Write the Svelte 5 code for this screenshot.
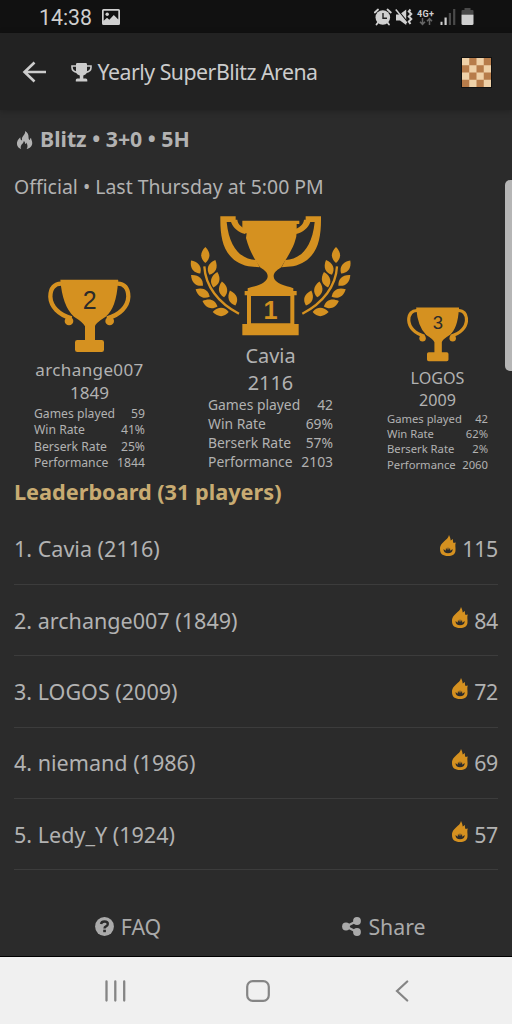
<script>
  const podium = [
    { place: 2, name: 'archange007', rating: 1849, games: 59, win: '41%', berserk: '25%', perf: 1844 },
    { place: 1, name: 'Cavia', rating: 2116, games: 42, win: '69%', berserk: '57%', perf: 2103 },
    { place: 3, name: 'LOGOS', rating: 2009, games: 42, win: '62%', berserk: '2%', perf: 2060 }
  ];
  const players = [
    { name: 'Cavia', rating: 2116, score: 115 },
    { name: 'archange007', rating: 1849, score: 84 },
    { name: 'LOGOS', rating: 2009, score: 72 },
    { name: 'niemand', rating: 1986, score: 69 },
    { name: 'Ledy_Y', rating: 1924, score: 57 }
  ];
  // Laurel leaves: centre x, centre y, rotation
  const leaves = [
    [76, 147, 0], [47, 183, -35], [97, 184, 22], [51, 223, -48], [106, 221, 15],
    [68, 261, -62], [129, 250, -8], [90, 293, -70], [158, 276, -20], [122, 318, -90]
  ];
</script>

<div class="screen">
  <div class="status">
    <span class="clock">14:38</span>
    <svg class="picture" width="18" height="17" viewBox="0 0 18 17"><path fill-rule="evenodd" fill="#d0d0d0" d="M1.500 0h15Q18 0 18 1.500v13q0 1.500-1.500 1.500h-15Q0 16 0 14.500v-13Q0 0 1.500 0zM1.700 1.700v10l3.300-3 2.300 2 4.500-4.700 4.500 4.500V1.700z"/><circle cx="5.200" cy="5.200" r="1.700" fill="#d0d0d0"/></svg>
    <div class="signals">
      <svg width="102" height="19" viewBox="0 0 102 19">
        <g fill="#d0d0d0">
          <circle cx="8.800" cy="9.500" r="7.300"/>
          <path d="M4 14.500l-1.500 2M13.500 14.500l1.500 2M.8 4.500L4 1.500M16.800 4.500L13.500 1.500" stroke="#d0d0d0" stroke-width="1.800" stroke-linecap="round"/>
          <path d="M9 5v5.300h4" stroke="#222" stroke-width="1.400" fill="none"/>
          <path d="M22 6.500h3.500L32.200 1.500v15.500L26 12.500h-4z"/>
          <path d="M22.800 1l11 13.500" stroke="#111" stroke-width="1.200"/>
          <path d="M21.800 1.500l11 13.500" stroke="#d0d0d0" stroke-width="1.500"/>
          <path d="M36.500 1.500l-1.700 2 2.500 2.500-2.500 2.500 2.500 2.500-2.500 2.500 1.700 2.500" stroke="#d0d0d0" stroke-width="2" fill="none"/>
          <text x="43" y="9" font-family="Roboto" font-weight="700" font-size="9" textLength="17">4G+</text>
          <path d="M66.500 13.800h2v3.200h-2zM70.500 9.500h2.200v7.500h-2.200z"/>
          <path d="M87.500 6.500h12v9q0 1.500-1.500 1.500h-9q-1.500 0-1.500-1.500z"/>
        </g>
        <path d="M48.500 10v6M46 13.800l2.500 2.700 2.500-2.700M55.500 17v-6M53 13.200l2.500-2.700 2.500 2.700" stroke="#666" stroke-width="1.500" fill="none"/>
        <path fill="#4a4a4a" d="M74.800 5H77v12h-2.200zM79.100 1h2.200v16h-2.200zM87.500 6V3q0-1 1-1h2V0h6v2h2q1 0 1 1v3z"/>
      </svg>
    </div>
  </div>

  <header>
    <svg class="back" width="25" height="22" viewBox="0 0 25 22"><path d="M12.500 1.500L2.500 11l10 9.500M3 11H24" fill="none" stroke="#ccc" stroke-width="2.600"/></svg>
    <svg class="cup" width="21" height="19" viewBox="0 0 21 19"><path fill="#ccc" d="M5 1.200Q5 0 6.200 0h8.600Q16 0 16 1.200V8q0 3.500-3.700 4.500v3h2.500q1.500 0 1.500 1.500v1.500H4.800V17q0-1.500 1.500-1.500h2.500v-3Q5 11.500 5 8z"/><path d="M5.500 3H1v1.500Q1 8.500 6.500 9.500M15.500 3H20v1.500q0 4-5.500 5" fill="none" stroke="#ccc" stroke-width="1.600"/></svg>
    <h1>Yearly SuperBlitz Arena</h1>
    <svg class="board" width="29" height="29" viewBox="0 0 4 4" preserveAspectRatio="none"><path fill="#efd1a8" d="M0 0h4v4H0z"/><path fill="#b77c4a" d="M1 0h1v1H1zM3 0h1v1H3zM0 1h1v1H0zM2 1h1v1H2zM1 2h1v1H1zM3 2h1v1H3zM0 3h1v1H0zM2 3h1v1H2z"/></svg>
  </header>

  <main>
    <div class="mode">
      <svg width="17" height="19" viewBox="0 0 18 20"><path fill="#b2b2b2" d="M9.500 0C10.200 2 9 3.500 7.500 5.300 6 7 6.200 8.200 6.500 10 4.800 9.500 4.500 8.300 4.600 6.600 2.500 8.500.7 11 1 13.800 1.200 16.500 3 18.300 5.400 19 4.300 16.500 5.300 14.700 7.300 12.800 8 12 8.300 11.500 8.200 10.600 9.400 11.400 9.700 12.500 9.500 13.700 10.500 13.300 10.800 12.700 10.800 12 12.500 14.300 12.600 17 11.300 19 14.500 18.300 17.200 16 17.200 12.600 17.200 10.500 16 9.200 15.900 7.200 15.100 7.700 14.700 8.500 14.600 9.400 13.700 9 13.200 8 13.300 6.700 13.400 3.800 12.500 1.500 9.500 0z"/></svg>
      <strong>Blitz • 3+0 • 5H</strong>
    </div>
    <div class="when">Official • Last Thursday at 5:00 PM</div>

    <section class="podium">
      {#each podium as p}
        <div class="spot place{p.place}">
          {#if p.place === 1}
            <svg class="trophy" viewBox="30 27 483 366" fill="#d59120">
              <path d="M187 44H358V54H350V66Q352 92 343 112C332 140 316 162 304 184C288 194 281 201 281 211C281 227 304 238 330 243L340 247V255H350V268H343V354H356V388H187V354H201V268H194V255H203V247L215 243C241 238 263 227 263 211C263 201 256 194 240 184C225 162 208 134 198 96L200 82H195L187 66ZM213 270V352H331V270Z" fill-rule="evenodd"/>
              <path d="M167 31H121V42C121 110 137 165 205 181L239 184L228 162C190 160 149 136 140 48H153C160 66 174 78 195 84L203 70C188 67 173 56 172 41H167Z"/>
              <path d="M377 31H423V42C423 110 407 165 339 181L305 184L316 162C354 160 395 136 404 48H391C384 66 370 78 349 84L341 70C356 67 371 56 372 41H377Z"/>
              <text x="272" y="340" text-anchor="middle" font-family="Liberation Sans" font-weight="700" font-size="76">1</text>
              {#each [0, 1] as side}
                <g transform={side ? 'translate(544 0) scale(-1 1)' : ''}>
                  <path d="M73 181C76 239 114 291 177 323" fill="none" stroke="#d59120" stroke-width="7"/>
                  {#each leaves as [x, y, r]}
                    <path d="M0-24C17-7 16 11 0 24C-16 11-17-7 0-24Z" transform="translate({x} {y}) rotate({r})"/>
                  {/each}
                </g>
              {/each}
            </svg>
          {:else}
            <svg class="trophy" viewBox="83 24 249 222" fill="#d59120">
              <path d="M120 26H293Q295 28 293 34Q288 112 256 137Q224 157 224 166V207H244Q251 207 251 214V236Q251 243 244 243H171Q164 243 164 236V214Q164 207 171 207H194V166Q190 155 161 137Q126 105 120 26Z"/>
              <path d="M126 38C103 36 90 52 90 77C91 106 115 132 154 142M288 38C312 36 324 52 324 77C323 106 299 132 260 142" fill="none" stroke="#d59120" stroke-width="13"/>
              <circle cx="146" cy="150" r="13"/><circle cx="268" cy="150" r="13"/>
              <text x="208" y="113" text-anchor="middle" font-family="Liberation Sans" font-size="75" fill="#2b2b2b">{p.place}</text>
            </svg>
          {/if}
          <div class="who name">{p.name}</div>
          <div class="who">{p.rating}</div>
          <dl>
            <div><dt>Games played</dt><dd>{p.games}</dd></div>
            <div><dt>Win Rate</dt><dd>{p.win}</dd></div>
            <div><dt>Berserk Rate</dt><dd>{p.berserk}</dd></div>
            <div><dt>Performance</dt><dd>{p.perf}</dd></div>
          </dl>
        </div>
      {/each}
    </section>

    <h2>Leaderboard (31 players)</h2>
    <ol>
      {#each players as p, i}
        <li>
          <span>{i + 1}. {p.name} ({p.rating})</span>
          <span class="score">
            <svg width="16" height="22" viewBox="0 0 16 22"><path fill="#d59120" fill-rule="evenodd" d="M9 0C10 2 10.500 3.500 10.700 5.500L13 4Q12.500 6 13.500 8L15.800 7.500C14.800 10 15.800 12 15.500 15.500C15.200 19.500 12.500 21 8 21C3 21 0 19 0 14C0 10 2 8.500 4 6.500C6 4.500 8.500 3 9 0ZM3.500 14Q3.700 18.300 8 18.300Q12.500 18.300 12.700 14L10.300 15.800 10 12.800 8.800 15 8 12 7.200 15 6 12.800 5.700 15.800Z"/></svg>
            <b>{p.score}</b>
          </span>
        </li>
      {/each}
    </ol>
  </main>

  <footer>
    <div class="action">
      <svg width="19" height="19" viewBox="0 0 19 19"><circle cx="9.500" cy="9.500" r="9.400" fill="#aaa"/><path d="M6 7Q6.500 4.500 9.500 4.500Q12.800 4.500 12.800 7Q12.800 8.500 11 9.300Q9.500 10 9.500 11.500" fill="none" stroke="#2b2b2b" stroke-width="2.400"/><path d="M8.200 12.700h2.700v2.500H8.200z" fill="#2b2b2b"/></svg>
      <span>FAQ</span>
    </div>
    <div class="action">
      <svg width="19" height="19" viewBox="0 0 19 19" fill="#aaa"><path d="M15 4L4 9.500 15 15" fill="none" stroke="#aaa" stroke-width="2.300"/><circle cx="4" cy="9.500" r="3.900"/><circle cx="15" cy="4" r="3.900"/><circle cx="15" cy="15" r="3.900"/></svg>
      <span>Share</span>
    </div>
  </footer>

  <nav>
    <svg width="21" height="22" viewBox="0 0 21 22"><path d="M1.500 1.500v19M10.300 1.500v19M19.200 1.500v19" stroke="#858585" stroke-width="2.300" stroke-linecap="round"/></svg>
    <svg class="home" width="24" height="22" viewBox="0 0 24 22"><rect x="1.200" y="1.200" width="21.600" height="19.600" rx="5.500" fill="none" stroke="#858585" stroke-width="2.200"/></svg>
    <svg width="14" height="22" viewBox="0 0 14 22"><path d="M12.200 1.500L2 11l10.200 9.500" fill="none" stroke="#858585" stroke-width="2.200" stroke-linecap="round"/></svg>
  </nav>

  <div class="thumb"></div>
</div>

<style>
  :global(body) { margin: 0; background: #2b2b2b; }
  .screen { position: relative; display: flex; flex-direction: column; width: 512px; height: 1024px; overflow: hidden; background: #2b2b2b; color: #b2b2b2; font-family: 'Noto Sans', sans-serif; white-space: nowrap; }
  svg { display: block; flex: none; }
  .status { height: 33px; flex: none; display: flex; align-items: center; box-sizing: border-box; padding: 2px 0 0 39px; background: #111; }
  .clock { width: 63px; font: 21.300px/30px Roboto, sans-serif; color: #cecece; }
  .signals { margin-left: 254px; }
  header { height: 77px; flex: none; display: flex; align-items: center; box-sizing: border-box; padding: 1px 21px 0 22px; background: #222; box-shadow: 0 1px 6px rgba(0, 0, 0, .25); }
  .cup { margin-left: 24px; }
  h1 { flex: 1; margin: -2px 0 0 5.500px; font-size: 21.300px; font-weight: 400; letter-spacing: -.5px; color: #ccc; }
  .board { outline: 1px solid #111; }
  main { flex: none; height: 761px; padding: 0 14px; }
  .mode { display: flex; align-items: center; gap: 7px; height: 29px; padding: 15px 0 0 2px; font-size: 21.300px; }
  .mode strong { margin-top: -2px; }
  .mode svg { margin-top: 2px; }
  .when { height: 28px; margin-top: 19px; font-size: 19.450px; line-height: 28px; }
  .podium { display: flex; align-items: flex-end; height: 271px; margin: 0 0 0 20px; }
  .spot { display: flex; flex-direction: column; align-items: center; line-height: 1.362; }
  .place2 { width: 111px; font-size: 17.070px; margin-right: 45px; }
  .place2 .name { letter-spacing: .35px; }
  .place1 { width: 161px; font-size: 19.900px; margin-right: 36px; }
  .place3 { width: 101px; font-size: 16.100px; }
  .place2 .trophy { width: 83px; height: 74px; margin-bottom: 5px; }
  .place2 dl { padding-top: 1px; }
  .place1 .trophy { width: 161px; height: 122px; margin-bottom: 5px; }
  .place3 .trophy { width: 61.500px; height: 55px; margin-bottom: 6px; }
  dl { width: 100%; margin: 0; }
  .place2 dl { font-size: 12.200px; }
  .place1 dl { width: 125px; font-size: 13.870px; }
  .place3 dl { font-size: 11.250px; margin-top: -1px; }
  dl div { display: flex; justify-content: space-between; }
  dd { margin: 0; }
  h2 { margin: 5px 0 0; height: 36.500px; font-size: 21.700px; line-height: 29px; color: #c8ab72; }
  ol { list-style: none; margin: 0; padding: 0; }
  li { display: flex; justify-content: space-between; align-items: center; box-sizing: border-box; height: 71.400px; border-bottom: 1.500px solid #3c3c3c; font-size: 21.550px; }
  .score { display: flex; align-items: center; gap: 6px; font-size: 21.300px; letter-spacing: -.3px; }
  .score svg { margin-top: -5px; }
  b { font-weight: 400; }
  footer { flex: none; height: 85px; display: flex; border-bottom: 1px solid #000; }
  .action { flex: 1; display: flex; justify-content: center; align-items: center; gap: 7px; height: 111px; font-size: 21.300px; color: #aaa; }
  .action span { margin-top: -1px; }
  nav { flex: 1; display: flex; align-items: center; justify-content: space-between; padding: 1px 103px 0 105px; background: #f0f0f0; }
  .home { margin-right: 5px; }
  .thumb { position: absolute; right: 0; top: 180px; width: 7px; height: 191px; border-radius: 5px 0 0 5px; background: #b5b5b5; }
</style>
